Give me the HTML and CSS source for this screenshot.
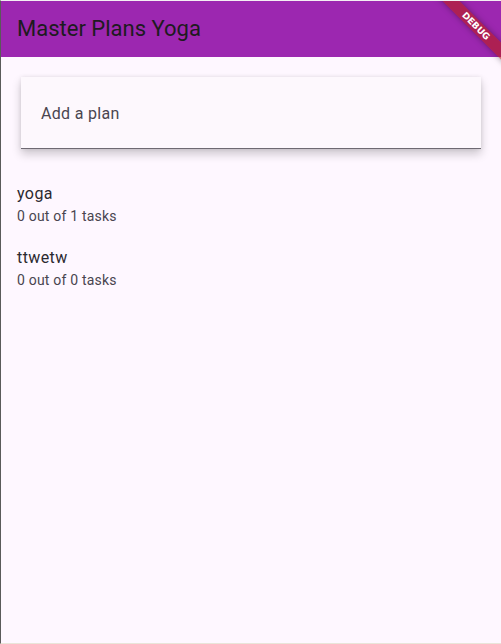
FILE: index.html
```html
<!DOCTYPE html>
<html>
<head>
<meta charset="utf-8">
<link rel="stylesheet" href="styles.css">
</head>
<body>
<div class="frame">
  <header class="appbar">
    <h1 class="appbar-title">Master Plans Yoga</h1>
  </header>
  <main class="content">
    <div class="plan-card">
      <span class="plan-placeholder">Add a plan</span>
    </div>
    <ul class="plan-list">
      <li class="plan-item">
        <div class="plan-name">yoga</div>
        <div class="plan-meta">0 out of 1 tasks</div>
      </li>
      <li class="plan-item">
        <div class="plan-name">ttwetw</div>
        <div class="plan-meta">0 out of 0 tasks</div>
      </li>
    </ul>
  </main>
  <div class="debug-banner">DEBUG</div>
</div>
</body>
</html>
```
FILE: styles.css
```css
html, body {
  margin: 0;
  padding: 0;
  background: #fef7ff;
}
body {
  font-family: Roboto, "Noto Sans", sans-serif;
}
.frame {
  position: relative;
  width: 501px;
  height: 644px;
  box-sizing: border-box;
  border-left: 1px solid #5a5a5a;
  border-top: 1px solid #f3eef3;
  border-bottom: 1px solid #e9e5d9;
  background: #fef7ff;
  overflow: hidden;
}
.appbar {
  height: 56px;
  background: #9c27b0;
  padding-left: 16px;
  display: flex;
  align-items: center;
}
.appbar-title {
  margin: 0;
  font-size: 22px;
  font-weight: 400;
  line-height: 56px;
  color: #1d1b20;
}
.content {
  display: flex;
  flex-direction: column;
}
.plan-card {
  margin: 20px 20px 0 20px;
  height: 72px;
  box-sizing: border-box;
  padding: 25px 20px 0 20px;
  background: #fdf8fd;
  border-bottom: 1px solid #6e6972;
  box-shadow: 0 5px 9px rgba(0, 0, 0, 0.2), 0 0 4px rgba(0, 0, 0, 0.08);
}
.plan-placeholder {
  font-size: 16px;
  line-height: 24px;
  color: #49454f;
  letter-spacing: 0.3px;
}
.plan-list {
  list-style: none;
  margin: 23px 0 0 0;
  padding: 0;
}
.plan-item {
  padding: 10px 16px;
}
.plan-name {
  font-size: 16px;
  line-height: 24px;
  color: #2b2930;
  letter-spacing: 0.4px;
}
.plan-meta {
  font-size: 14px;
  line-height: 20px;
  color: #49454f;
  letter-spacing: 0.2px;
}
.debug-banner {
  position: absolute;
  top: 19px;
  left: 423px;
  width: 104px;
  height: 12px;
  transform: rotate(45deg);
  background: rgba(183, 28, 28, 0.63);
  box-shadow: 0 0 6px rgba(0, 0, 0, 0.35);
  color: #ffffff;
  font-family: "DejaVu Sans", sans-serif;
  font-weight: 700;
  font-size: 9px;
  line-height: 12px;
  text-align: center;
  letter-spacing: 0;
}
```
